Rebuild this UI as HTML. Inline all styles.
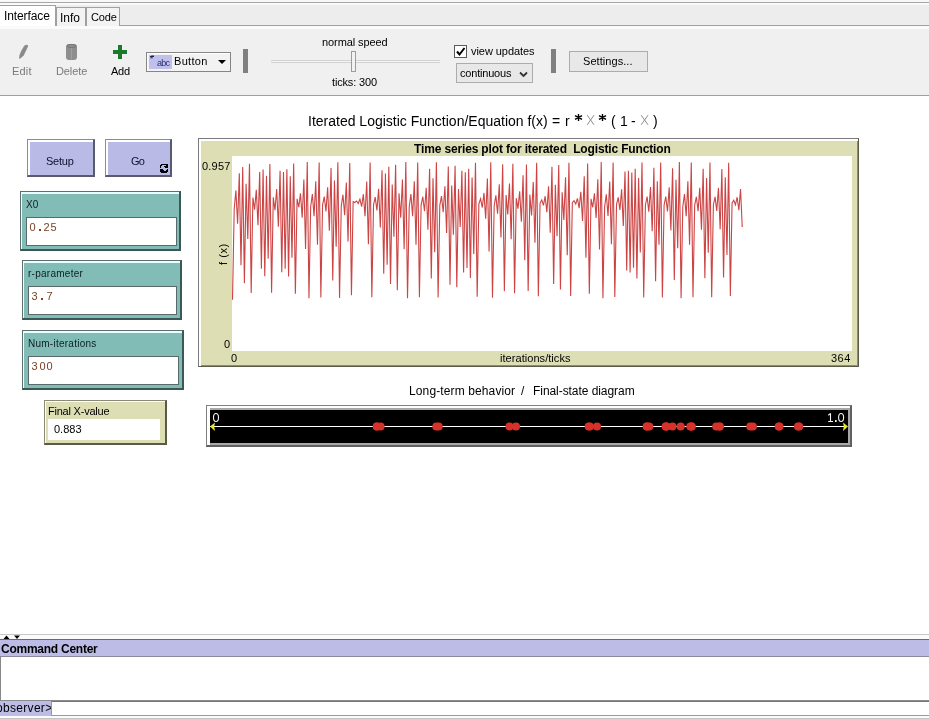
<!DOCTYPE html>
<html><head><meta charset="utf-8">
<style>
*{margin:0;padding:0;box-sizing:border-box}
html,body{width:929px;height:719px;overflow:hidden;background:#fff}
body{position:relative;font-family:"Liberation Sans",sans-serif;font-size:12px;color:#000}
.a{position:absolute}
.t{position:absolute;white-space:pre;line-height:1;will-change:transform}
</style></head><body>

<div class="a" style="left:0;top:0;width:929px;height:26px;background:#ededed"></div>
<div class="a" style="left:0;top:3px;width:929px;height:2px;background:#fafafa"></div>
<div class="a" style="left:0;top:0;width:929px;height:2px;background:#f8f8f8"></div>
<div class="a" style="left:0;top:2px;width:929px;height:1px;background:#a8a8a8"></div>
<div class="a" style="left:55px;top:25px;width:874px;height:1px;background:#a0a0a0"></div>
<div class="a" style="left:0;top:5px;width:56px;height:24px;background:#fff;border-top:1px solid #a0a0a0;border-right:1px solid #a0a0a0"></div>
<div class="a" style="left:56px;top:7px;width:30px;height:19px;background:#f3f3f3;border:1px solid #a0a0a0;border-bottom:none"></div>
<div class="a" style="left:86px;top:7px;width:34px;height:19px;background:#f3f3f3;border:1px solid #a0a0a0;border-bottom:none"></div>
<div class="t" style="left:4px;top:9.54px;font-size:12px;letter-spacing:-0.1px;font-weight:normal;color:#000;font-family:'Liberation Sans',sans-serif;">Interface</div>

<div class="t" style="left:60px;top:12.04px;font-size:12px;letter-spacing:0px;font-weight:normal;color:#000;font-family:'Liberation Sans',sans-serif;">Info</div>

<div class="t" style="left:91px;top:11.89px;font-size:11px;letter-spacing:-0.15px;font-weight:normal;color:#000;font-family:'Liberation Sans',sans-serif;">Code</div>

<div class="a" style="left:0;top:26px;width:929px;height:3px;background:#fbfbfb"></div>
<div class="a" style="left:0;top:29px;width:929px;height:66px;background:#f0f0f0"></div>
<div class="a" style="left:0;top:95px;width:929px;height:1px;background:#a0a0a0"></div>
<svg class="a" style="left:17px;top:43px" width="14" height="17" viewBox="0 0 14 17"><path d="M2 16 L2.5 12 L4.2 8 L6.8 3.4 Q8.6 0.6 11.3 2.8 L8.9 8 L6.8 12.2 L4.2 14.8 Z" fill="#8a8a8a"/></svg>
<div class="t" style="left:12px;top:65.99px;font-size:11px;letter-spacing:0.17px;font-weight:normal;color:#7a7a7a;font-family:'Liberation Sans',sans-serif;">Edit</div>

<svg class="a" style="left:65px;top:43px" width="13" height="18" viewBox="0 0 13 18"><rect x="1" y="1" width="11" height="16" rx="3" fill="#8e8e8e"/><ellipse cx="6.5" cy="3" rx="4.5" ry="1.6" fill="none" stroke="#707070" stroke-width="0.8"/><rect x="6" y="5" width="1" height="11" fill="#a0a0a0"/></svg>
<div class="t" style="left:56px;top:65.99px;font-size:11px;letter-spacing:-0.1px;font-weight:normal;color:#7a7a7a;font-family:'Liberation Sans',sans-serif;">Delete</div>

<div class="a" style="left:113px;top:50px;width:14px;height:4px;background:#1a7a2a"></div>
<div class="a" style="left:118px;top:45px;width:4px;height:14px;background:#1a7a2a"></div>
<div class="t" style="left:111px;top:65.99px;font-size:11px;letter-spacing:-0.25px;font-weight:normal;color:#000;font-family:'Liberation Sans',sans-serif;">Add</div>

<div class="a" style="left:146px;top:52px;width:85px;height:20px;background:#f2f2f2;border:1px solid #858585;box-shadow:inset 1px 1px 0 #fff"></div>
<div class="a" style="left:149px;top:55px;width:23px;height:14px;background:#c0c0ec"></div>
<div class="t" style="left:156.5px;top:58.58px;font-size:9px;letter-spacing:-0.7px;font-weight:normal;color:#303070;font-family:'Liberation Sans',sans-serif;">abc</div>

<svg class="a" style="left:149px;top:55px" width="7" height="5"><path d="M1 1.5 H5 M3 0.3 V3.5 M1.5 3 L4.5 0.5" stroke="#202060" stroke-width="1"/></svg>
<div class="t" style="left:174px;top:56.39px;font-size:11px;letter-spacing:0.3px;font-weight:normal;color:#000;font-family:'Liberation Sans',sans-serif;">Button</div>

<svg class="a" style="left:218px;top:60px" width="9" height="5"><path d="M0 0 H8 L4 4 Z" fill="#000"/></svg>
<div class="a" style="left:243px;top:49px;width:5px;height:24px;background:#808080"></div>
<div class="t" style="left:322px;top:37.09px;font-size:11px;letter-spacing:-0.09px;font-weight:normal;color:#000;font-family:'Liberation Sans',sans-serif;">normal speed</div>

<div class="a" style="left:271px;top:60px;width:169px;height:3px;background:#f6f6f6;border-top:1px solid #d2d2d2;border-bottom:1px solid #d2d2d2"></div>
<div class="a" style="left:351px;top:51px;width:5px;height:21px;background:#f2f2f2;border:1px solid #9c9c9c"></div>
<div class="t" style="left:332.4px;top:76.99px;font-size:11px;letter-spacing:-0.16px;font-weight:normal;color:#000;font-family:'Liberation Sans',sans-serif;">ticks: 300</div>

<div class="a" style="left:454px;top:45px;width:13px;height:13px;background:#fff;border:1px solid #5a5a5a"></div>
<svg class="a" style="left:455px;top:46px" width="11" height="11"><path d="M2 5.5 L4.5 8.5 L9.5 2" stroke="#000" stroke-width="2" fill="none"/></svg>
<div class="t" style="left:471px;top:45.99px;font-size:11px;letter-spacing:-0.06px;font-weight:normal;color:#000;font-family:'Liberation Sans',sans-serif;">view updates</div>

<div class="a" style="left:456px;top:63px;width:77px;height:20px;background:#e8e8e8;border:1px solid #acacac"></div>
<div class="t" style="left:460px;top:68.29px;font-size:11px;letter-spacing:-0.2px;font-weight:normal;color:#000;font-family:'Liberation Sans',sans-serif;">continuous</div>

<svg class="a" style="left:519px;top:71px" width="9" height="7"><path d="M1 1.5 L4.5 5 L8 1.5" stroke="#333" stroke-width="1.8" fill="none"/></svg>
<div class="a" style="left:551px;top:49px;width:5px;height:24px;background:#808080"></div>
<div class="a" style="left:569px;top:51px;width:79px;height:21px;background:#e8e8e8;border:1px solid #acacac"></div>
<div class="t" style="left:583px;top:56.29px;font-size:11px;letter-spacing:0.06px;font-weight:normal;color:#000;font-family:'Liberation Sans',sans-serif;">Settings...</div>

<div class="t" style="left:308px;top:113.65px;font-size:14px;letter-spacing:0px;font-weight:normal;color:#000;font-family:'Liberation Sans',sans-serif;">Iterated Logistic Function/Equation f(x)</div>

<div class="t" style="left:552px;top:113.65px;font-size:14px;letter-spacing:0px;font-weight:normal;color:#000;font-family:'Liberation Sans',sans-serif;">=</div>

<div class="t" style="left:565px;top:113.65px;font-size:14px;letter-spacing:0px;font-weight:normal;color:#000;font-family:'Liberation Sans',sans-serif;">r</div>

<div class="t" style="left:611px;top:113.65px;font-size:14px;letter-spacing:0px;font-weight:normal;color:#000;font-family:'Liberation Sans',sans-serif;">(</div>

<div class="t" style="left:620px;top:113.65px;font-size:14px;letter-spacing:0px;font-weight:normal;color:#000;font-family:'Liberation Sans',sans-serif;">1</div>

<div class="t" style="left:631px;top:113.65px;font-size:14px;letter-spacing:0px;font-weight:normal;color:#000;font-family:'Liberation Sans',sans-serif;">-</div>

<div class="t" style="left:652.5px;top:113.65px;font-size:14px;letter-spacing:0px;font-weight:normal;color:#000;font-family:'Liberation Sans',sans-serif;">)</div>

<svg class="a" style="left:0;top:0" width="929" height="140"><path d="M578.5 114 V121 M575.0 115.6 L582.0 119.4 M575.0 119.4 L582.0 115.6" stroke="#000" stroke-width="1.4"/><path d="M587.2 115.2 L594.0 124.8 M594.0 115.2 L587.2 124.8" stroke="#8a8a8a" stroke-width="1"/><path d="M602.5 114 V121 M599.0 115.6 L606.0 119.4 M599.0 119.4 L606.0 115.6" stroke="#000" stroke-width="1.4"/><path d="M641.2 115.2 L648.0 124.8 M648.0 115.2 L641.2 124.8" stroke="#8a8a8a" stroke-width="1"/></svg>
<div class="a" style="left:27px;top:139px;width:68px;height:38px;background:#babae6;border-top:1px solid #8c8c8c;border-left:1px solid #8c8c8c;border-right:2px solid #5a5a6e;border-bottom:2px solid #5a5a6e;box-shadow:inset 2px 2px 0 #fff"></div>
<div class="t" style="left:46px;top:156.29px;font-size:11px;letter-spacing:-0.25px;font-weight:normal;color:#101030;font-family:'Liberation Sans',sans-serif;">Setup</div>

<div class="a" style="left:105px;top:139px;width:67px;height:38px;background:#babae6;border-top:1px solid #8c8c8c;border-left:1px solid #8c8c8c;border-right:2px solid #5a5a6e;border-bottom:2px solid #5a5a6e;box-shadow:inset 2px 2px 0 #fff"></div>
<div class="t" style="left:131px;top:155.99px;font-size:11px;letter-spacing:-0.8px;font-weight:normal;color:#101030;font-family:'Liberation Sans',sans-serif;">Go</div>

<svg class="a" style="left:160px;top:164px" width="8" height="9" shape-rendering="crispEdges"><g fill="#000"><rect x="1" y="0" width="7" height="1"/><rect x="0" y="1" width="2" height="1"/><rect x="6" y="1" width="2" height="1"/><rect x="0" y="2" width="1" height="1"/><rect x="4" y="2" width="4" height="1"/><rect x="0" y="3" width="1" height="1"/><rect x="5" y="3" width="3" height="1"/><rect x="0" y="5" width="3" height="1"/><rect x="7" y="5" width="1" height="1"/><rect x="0" y="6" width="4" height="1"/><rect x="6" y="6" width="2" height="1"/><rect x="0" y="7" width="8" height="1"/><rect x="1" y="8" width="6" height="1"/></g></svg>
<div class="a" style="left:20px;top:191px;width:161px;height:60px;background:#82bcb7;border-top:1px solid #5e6e6c;border-left:1px solid #5e6e6c;border-right:2px solid #3a5856;border-bottom:2px solid #3a5856;box-shadow:inset 1px 2px 0 #e8ffff"></div>
<div class="t" style="left:26px;top:200.13px;font-size:10px;letter-spacing:0.1px;font-weight:normal;color:#0a2020;font-family:'Liberation Sans',sans-serif;">X0</div>

<div class="a" style="left:26px;top:217px;width:151px;height:29px;background:#fff;border:1px solid #5a6a68"></div>
<div class="t" style="left:28.70px;top:222.29px;width:7.2px;text-align:center;font-size:11px;color:#7a4226">0</div>
<div class="a" style="left:38.50px;top:228.70px;width:2px;height:2.2px;background:#7a4226"></div>
<div class="t" style="left:43.10px;top:222.29px;width:7.2px;text-align:center;font-size:11px;color:#7a4226">2</div>
<div class="t" style="left:50.30px;top:222.29px;width:7.2px;text-align:center;font-size:11px;color:#7a4226">5</div>

<div class="a" style="left:22px;top:260px;width:160px;height:60px;background:#82bcb7;border-top:1px solid #5e6e6c;border-left:1px solid #5e6e6c;border-right:2px solid #3a5856;border-bottom:2px solid #3a5856;box-shadow:inset 1px 2px 0 #e8ffff"></div>
<div class="t" style="left:28px;top:269.24px;font-size:10px;letter-spacing:0.26px;font-weight:normal;color:#0a2020;font-family:'Liberation Sans',sans-serif;">r-parameter</div>

<div class="a" style="left:28px;top:286px;width:149px;height:29px;background:#fff;border:1px solid #5a6a68"></div>
<div class="t" style="left:31.45px;top:291.29px;width:7.2px;text-align:center;font-size:11px;color:#7a4226">3</div>
<div class="a" style="left:41.25px;top:297.70px;width:2px;height:2.2px;background:#7a4226"></div>
<div class="t" style="left:45.85px;top:291.29px;width:7.2px;text-align:center;font-size:11px;color:#7a4226">7</div>

<div class="a" style="left:22px;top:330px;width:162px;height:60px;background:#82bcb7;border-top:1px solid #5e6e6c;border-left:1px solid #5e6e6c;border-right:2px solid #3a5856;border-bottom:2px solid #3a5856;box-shadow:inset 1px 2px 0 #e8ffff"></div>
<div class="t" style="left:28px;top:338.84px;font-size:10px;letter-spacing:0.25px;font-weight:normal;color:#0a2020;font-family:'Liberation Sans',sans-serif;">Num-iterations</div>

<div class="a" style="left:28px;top:356px;width:151px;height:29px;background:#fff;border:1px solid #5a6a68"></div>
<div class="t" style="left:31.45px;top:361.29px;width:7.2px;text-align:center;font-size:11px;color:#7a4226">3</div>
<div class="t" style="left:38.65px;top:361.29px;width:7.2px;text-align:center;font-size:11px;color:#7a4226">0</div>
<div class="t" style="left:45.85px;top:361.29px;width:7.2px;text-align:center;font-size:11px;color:#7a4226">0</div>

<div class="a" style="left:44px;top:400px;width:123px;height:45px;background:#dedeb4;border-top:1px solid #8a8a7a;border-left:1px solid #8a8a7a;border-right:2px solid #5a5a48;border-bottom:2px solid #5a5a48;box-shadow:inset 1px 1px 0 #fff"></div>
<div class="t" style="left:48px;top:406.09px;font-size:11px;letter-spacing:-0.22px;font-weight:normal;color:#000;font-family:'Liberation Sans',sans-serif;">Final X-value</div>

<div class="a" style="left:48px;top:419px;width:112px;height:21px;background:#fff"></div>
<div class="t" style="left:53.5px;top:423.79px;font-size:11px;letter-spacing:0px;font-weight:normal;color:#000;font-family:'Liberation Sans',sans-serif;">0.883</div>

<div class="a" style="left:198px;top:138px;width:661px;height:229px;background:#dedeb4;border-top:1px solid #7a7a7a;border-left:1px solid #7a7a7a;border-right:1px solid #5a5a4a;border-bottom:1px solid #5a5a4a;box-shadow:inset 2px 2px 0 #fff,inset -1px -1px 0 #8c8c78"></div>
<div class="a" style="left:232px;top:156px;width:620px;height:195px;background:#fff"></div>
<div class="t" style="left:413.5px;top:142.54px;font-size:12px;letter-spacing:-0.15px;font-weight:bold;color:#000;font-family:'Liberation Sans',sans-serif;">Time series plot for iterated  Logistic Function</div>

<div class="t" style="left:201.5px;top:160.99px;font-size:11px;letter-spacing:0.22px;font-weight:normal;color:#000;font-family:'Liberation Sans',sans-serif;">0.957</div>

<div class="t" style="left:223.5px;top:338.89px;font-size:11px;letter-spacing:0px;font-weight:normal;color:#000;font-family:'Liberation Sans',sans-serif;">0</div>

<div class="t" style="left:230.5px;top:353.09px;font-size:11px;letter-spacing:0px;font-weight:normal;color:#000;font-family:'Liberation Sans',sans-serif;">0</div>

<div class="t" style="left:499.5px;top:352.99px;font-size:11px;letter-spacing:0.05px;font-weight:normal;color:#000;font-family:'Liberation Sans',sans-serif;">iterations/ticks</div>

<div class="t" style="left:831px;top:353.29px;font-size:11px;letter-spacing:0.5px;font-weight:normal;color:#000;font-family:'Liberation Sans',sans-serif;">364</div>

<div class="t" style="left:218px;top:264.5px;font-size:11px;letter-spacing:0.58px;transform:rotate(-90deg);transform-origin:0 0;line-height:11px">f (x)</div>
<svg class="a" style="left:0;top:0" width="929" height="719"><polyline points="232.50,299.66 234.20,209.24 235.90,190.42 237.60,223.83 239.30,173.37 241.00,265.23 242.70,167.07 244.39,283.18 246.09,183.69 247.79,238.92 249.49,163.86 251.19,292.87 252.89,197.51 254.59,209.73 256.29,189.72 257.99,225.32 259.69,172.06 261.39,268.83 263.09,169.47 264.78,276.17 266.48,175.80 268.18,258.66 269.88,163.92 271.58,292.71 273.28,197.26 274.98,210.21 276.68,189.05 278.38,226.78 280.08,170.86 281.78,272.19 283.48,172.12 285.17,268.66 286.87,169.34 288.57,276.53 290.27,176.16 291.97,257.72 293.67,163.59 295.37,293.71 297.07,198.87 298.77,207.24 300.47,193.37 302.17,217.75 303.87,179.53 305.56,249.04 307.26,162.12 308.96,298.29 310.66,206.74 312.36,194.12 314.06,216.26 315.76,181.25 317.46,244.77 319.16,162.40 320.86,297.41 322.56,205.17 324.26,196.56 325.95,211.52 327.65,187.24 329.35,230.75 331.05,167.98 332.75,280.48 334.45,180.44 336.15,246.79 337.85,162.19 339.55,298.08 341.25,206.37 342.95,194.69 344.65,215.13 346.34,182.60 348.04,241.50 349.74,163.07 351.44,295.33 353.14,201.58 354.84,202.47 356.54,200.96 358.24,203.55 359.94,199.17 361.64,206.69 363.34,194.19 365.04,216.11 366.73,181.43 368.43,244.34 370.13,162.47 371.83,297.21 373.53,204.81 375.23,197.13 376.93,210.45 378.63,188.72 380.33,227.49 382.03,170.30 383.73,273.78 385.43,173.52 387.12,264.80 388.82,166.82 390.52,283.93 392.22,184.63 393.92,236.71 395.62,164.74 397.32,290.18 399.02,193.34 400.72,217.82 402.42,179.46 404.12,249.22 405.82,162.12 407.52,298.28 409.21,206.73 410.91,194.14 412.61,216.21 414.31,181.31 416.01,244.64 417.71,162.42 419.41,297.35 421.11,205.06 422.81,196.73 424.51,211.19 426.21,187.69 427.91,229.74 429.60,168.66 431.30,278.51 433.00,178.24 434.70,252.33 436.40,162.36 438.10,297.55 439.80,205.42 441.50,196.16 443.20,212.29 444.90,186.22 446.60,233.04 448.30,166.58 449.99,284.62 451.69,185.53 453.39,234.62 455.09,165.73 456.79,287.19 458.49,188.99 460.19,226.90 461.89,170.77 463.59,272.46 465.29,172.35 466.99,268.01 468.69,168.88 470.38,277.87 472.08,177.55 473.78,254.10 475.48,162.65 477.18,296.65 478.88,203.83 480.58,198.71 482.28,207.53 483.98,192.92 485.68,218.65 487.38,178.54 489.08,251.56 490.77,162.27 492.47,297.84 494.17,205.93 495.87,195.37 497.57,213.81 499.27,184.25 500.97,237.59 502.67,164.37 504.37,291.32 506.07,195.07 507.77,214.38 509.47,183.53 511.16,239.28 512.86,163.74 514.56,293.25 516.26,198.14 517.96,208.58 519.66,191.37 521.36,221.84 523.06,175.24 524.76,260.15 526.46,164.49 528.16,290.93 529.86,194.48 531.55,215.54 533.25,182.11 534.95,242.69 536.65,162.78 538.35,296.23 540.05,203.10 541.75,199.90 543.45,205.39 545.15,196.21 546.85,212.18 548.55,186.36 550.25,232.74 551.95,166.76 553.64,284.10 555.34,184.85 557.04,236.19 558.74,164.97 560.44,289.48 562.14,192.29 563.84,219.95 565.54,177.15 567.24,255.12 568.94,162.86 570.64,295.97 572.34,202.66 574.03,200.65 575.73,204.08 577.43,198.30 579.13,208.28 580.83,191.81 582.53,220.92 584.23,176.15 585.93,257.74 587.63,163.60 589.33,293.69 591.03,198.84 592.73,207.30 594.42,193.27 596.12,217.95 597.82,179.31 599.52,249.60 601.22,162.13 602.92,298.25 604.62,206.67 606.32,194.22 608.02,216.05 609.72,181.50 611.42,244.16 613.12,162.50 614.81,297.11 616.51,204.65 618.21,197.39 619.91,209.97 621.61,189.39 623.31,226.03 625.01,171.47 626.71,270.49 628.41,170.73 630.11,272.57 631.81,172.45 633.51,267.75 635.20,168.69 636.90,278.41 638.60,178.13 640.30,252.61 642.00,162.40 643.70,297.43 645.40,205.21 647.10,196.49 648.80,211.65 650.50,187.07 652.20,231.12 653.90,167.74 655.59,281.19 657.29,181.27 658.99,244.74 660.69,162.41 662.39,297.39 664.09,205.14 665.79,196.60 667.49,211.44 669.19,187.36 670.89,230.49 672.59,168.15 674.29,279.98 675.98,179.87 677.68,248.20 679.38,162.13 681.08,298.28 682.78,206.73 684.48,194.14 686.18,216.21 687.88,181.31 689.58,244.62 691.28,162.42 692.98,297.34 694.68,205.05 696.38,196.75 698.07,211.16 699.77,187.74 701.47,229.65 703.17,168.73 704.87,278.32 706.57,178.03 708.27,252.86 709.97,162.43 711.67,297.32 713.37,205.01 715.07,196.82 716.77,211.04 718.46,187.91 720.16,229.28 721.86,168.99 723.56,277.56 725.26,177.23 726.96,254.93 728.66,162.82 730.36,296.10 732.06,202.89 733.76,200.26 735.46,204.75 737.16,197.22 738.85,210.28 740.55,188.95 742.25,227.00" fill="none" stroke="#cc4444" stroke-width="1.1"/></svg>
<div class="t" style="left:409px;top:384.74px;font-size:12px;letter-spacing:0.12px;font-weight:normal;color:#000;font-family:'Liberation Sans',sans-serif;">Long-term behavior</div>

<div class="t" style="left:521px;top:384.74px;font-size:12px;letter-spacing:0px;font-weight:normal;color:#000;font-family:'Liberation Sans',sans-serif;">/</div>

<div class="t" style="left:533px;top:384.74px;font-size:12px;letter-spacing:-0.06px;font-weight:normal;color:#000;font-family:'Liberation Sans',sans-serif;">Final-state diagram</div>

<div class="a" style="left:206px;top:405px;width:646px;height:42px;background:#a8a8a8;border-top:1px solid #808080;border-left:1px solid #808080;border-right:2px solid #606060;border-bottom:2px solid #606060;box-shadow:inset 3px 2px 0 #fff"></div>
<div class="a" style="left:210px;top:410px;width:638px;height:33px;background:#000"></div>
<div class="a" style="left:210px;top:426px;width:634px;height:1px;background:#fff"></div>
<svg class="a" style="left:210px;top:410px" width="638" height="33"><g fill="#d73229"><circle cx="166.8" cy="16.6" r="4"/><circle cx="455.7" cy="16.6" r="4"/><circle cx="481.7" cy="16.6" r="4"/><circle cx="436.6" cy="16.6" r="4"/><circle cx="509.9" cy="16.6" r="4"/><circle cx="378.7" cy="16.6" r="4"/><circle cx="569.5" cy="16.6" r="4"/><circle cx="226.3" cy="16.6" r="4"/><circle cx="540.3" cy="16.6" r="4"/><circle cx="306.0" cy="16.6" r="4"/><circle cx="589.2" cy="16.6" r="4"/><circle cx="166.8" cy="16.6" r="4"/><circle cx="455.9" cy="16.6" r="4"/><circle cx="481.5" cy="16.6" r="4"/><circle cx="437.0" cy="16.6" r="4"/><circle cx="509.4" cy="16.6" r="4"/><circle cx="379.9" cy="16.6" r="4"/><circle cx="568.7" cy="16.6" r="4"/><circle cx="228.7" cy="16.6" r="4"/><circle cx="542.9" cy="16.6" r="4"/><circle cx="299.5" cy="16.6" r="4"/><circle cx="588.0" cy="16.6" r="4"/><circle cx="170.6" cy="16.6" r="4"/><circle cx="462.5" cy="16.6" r="4"/><circle cx="470.7" cy="16.6" r="4"/><circle cx="456.7" cy="16.6" r="4"/><circle cx="480.3" cy="16.6" r="4"/><circle cx="439.3" cy="16.6" r="4"/><circle cx="506.2" cy="16.6" r="4"/><circle cx="387.0" cy="16.6" r="4"/></g><path d="M0 16.6 L5 12.4 L4.2 16.6 L5 21 Z" fill="#e8e830"/><path d="M638 16.6 L633 12.4 L633.8 16.6 L633 21 Z" fill="#e8e830"/></svg>
<svg class="a" style="left:0;top:0" width="929" height="440"><g fill="none" stroke="#f4f4f4" stroke-width="1.1"><ellipse cx="216" cy="417.5" rx="2.5" ry="4"/><ellipse cx="841.1" cy="417.5" rx="2.5" ry="4"/><path d="M830.5 413.3 V421.6 M828.3 415.2 L830.5 413.5 M828.2 421.5 H833"/></g><rect x="835" y="420" width="1.6" height="2" fill="#f4f4f4"/></svg>
<div class="a" style="left:0;top:634px;width:929px;height:1px;background:#c8c8c8"></div>
<div class="a" style="left:0;top:635px;width:929px;height:4px;background:#fbfbfb"></div>
<svg class="a" style="left:2px;top:635px" width="20" height="5"><path d="M1.5 4 L4.5 0.5 L7.5 4Z M12 0.5 H18 L15 4Z" fill="#000"/></svg>
<div class="a" style="left:0;top:639px;width:929px;height:1px;background:#6a6a6a"></div>
<div class="a" style="left:0;top:640px;width:929px;height:16px;background:#bcbce6"></div>
<div class="t" style="left:0.5px;top:642.54px;font-size:12px;letter-spacing:-0.25px;font-weight:bold;color:#000;font-family:'Liberation Sans',sans-serif;">Command Center</div>

<div class="a" style="left:0;top:656px;width:929px;height:1px;background:#8a8a9a"></div>
<div class="a" style="left:0;top:657px;width:929px;height:43px;background:#fff;border-left:1px solid #888"></div>
<div class="a" style="left:0;top:700px;width:929px;height:1px;background:#8a8a8a"></div>
<div class="a" style="left:0;top:701px;width:51px;height:15px;background:#bcbce6"></div>
<div class="t" style="left:-4.5px;top:702.34px;font-size:12px;letter-spacing:0.31px;font-weight:normal;color:#000;font-family:'Liberation Sans',sans-serif;">observer&gt;</div>

<div class="a" style="left:51px;top:701px;width:878px;height:15px;background:#fff;border-top:1px solid #777;border-left:1px solid #999;border-bottom:1px solid #9a9a9a"></div>
<div class="a" style="left:0;top:716px;width:929px;height:2px;background:#fbfbfb"></div>
<div class="a" style="left:0;top:718px;width:929px;height:1px;background:#c4c4c4"></div>
</body></html>
